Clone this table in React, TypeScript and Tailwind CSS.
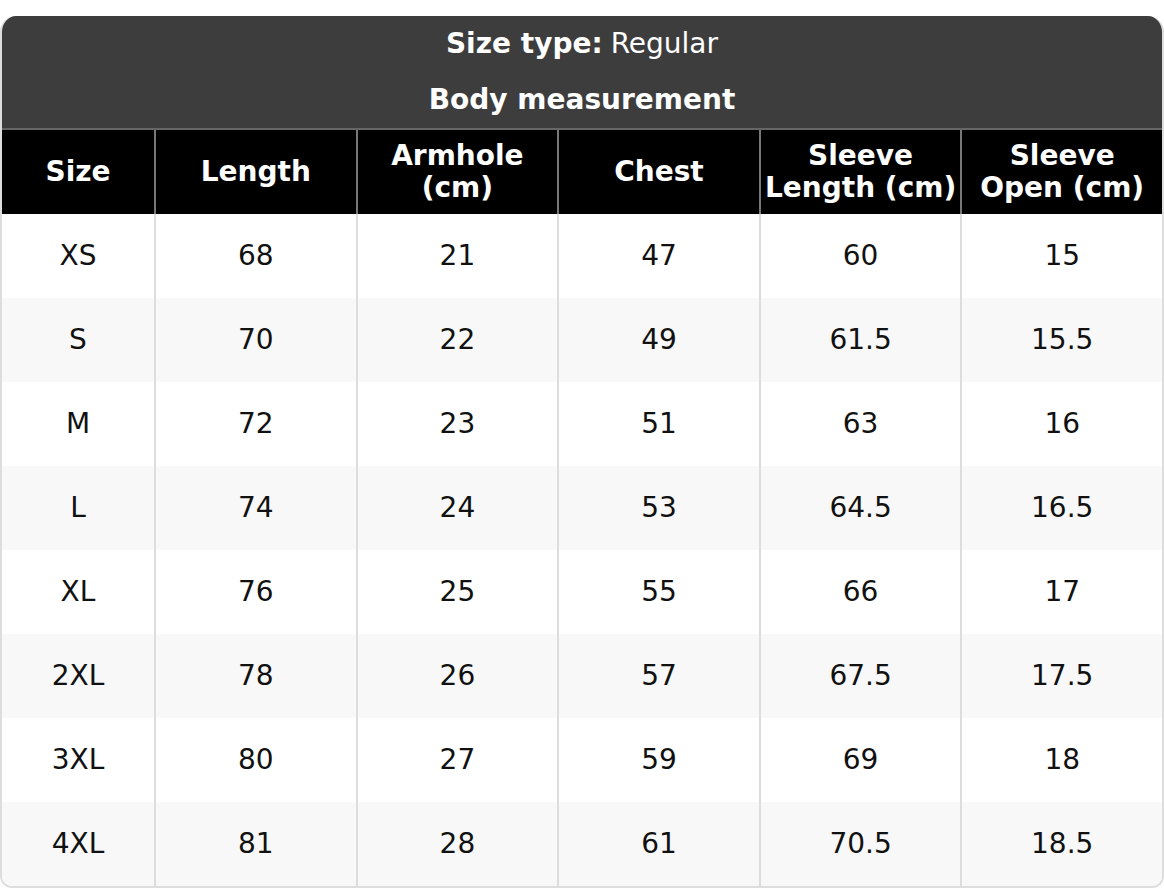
const headers = [
  ["Size"],
  ["Length"],
  ["Armhole", "(cm)"],
  ["Chest"],
  ["Sleeve", "Length (cm)"],
  ["Sleeve", "Open (cm)"],
]

const rows = [
  ["XS", "68", "21", "47", "60", "15"],
  ["S", "70", "22", "49", "61.5", "15.5"],
  ["M", "72", "23", "51", "63", "16"],
  ["L", "74", "24", "53", "64.5", "16.5"],
  ["XL", "76", "25", "55", "66", "17"],
  ["2XL", "78", "26", "57", "67.5", "17.5"],
  ["3XL", "80", "27", "59", "69", "18"],
  ["4XL", "81", "28", "61", "70.5", "18.5"],
]

export default function App() {
  return (
    <div className="w-[1164px] h-[888px] bg-white pt-4 font-['DejaVu_Sans',sans-serif]">
      <div className="rounded-t-[16px] rounded-b-[12px] overflow-hidden border-2 border-t-0 border-[#dddddd]">
        <div className="bg-[#3d3d3d] text-white text-[28px] leading-8 border-b-2 border-[#666666] -mx-[2px]">
          <div className="h-14 flex items-center justify-center">
            <span className="font-bold">Size type:</span>
            <span className="ml-2">Regular</span>
          </div>
          <div className="h-14 flex items-center justify-center font-bold">Body measurement</div>
        </div>

        <div className="grid grid-cols-[152px_repeat(5,1fr)] bg-black text-white text-[28px] leading-8 font-bold">
          {headers.map((h, i) => (
            <div
              key={i}
              className={"h-[84px] flex flex-col items-center justify-center text-center " + (i > 0 ? "border-l-2 border-[#777777]" : "")}
            >
              {h.map((line, j) => (
                <span key={j} className="whitespace-nowrap">{line}</span>
              ))}
            </div>
          ))}
        </div>

        {rows.map((r, ri) => (
          <div
            key={ri}
            className={"grid grid-cols-[152px_repeat(5,1fr)] text-[28px] leading-8 text-[#111111] " + (ri % 2 === 1 ? "bg-[#f8f8f8]" : "bg-white")}
          >
            {r.map((c, ci) => (
              <div
                key={ci}
                className={"h-[84px] flex items-center justify-center " + (ci > 0 ? "border-l-2 border-[#dddddd]" : "")}
              >
                {c}
              </div>
            ))}
          </div>
        ))}
      </div>
    </div>
  )
}
